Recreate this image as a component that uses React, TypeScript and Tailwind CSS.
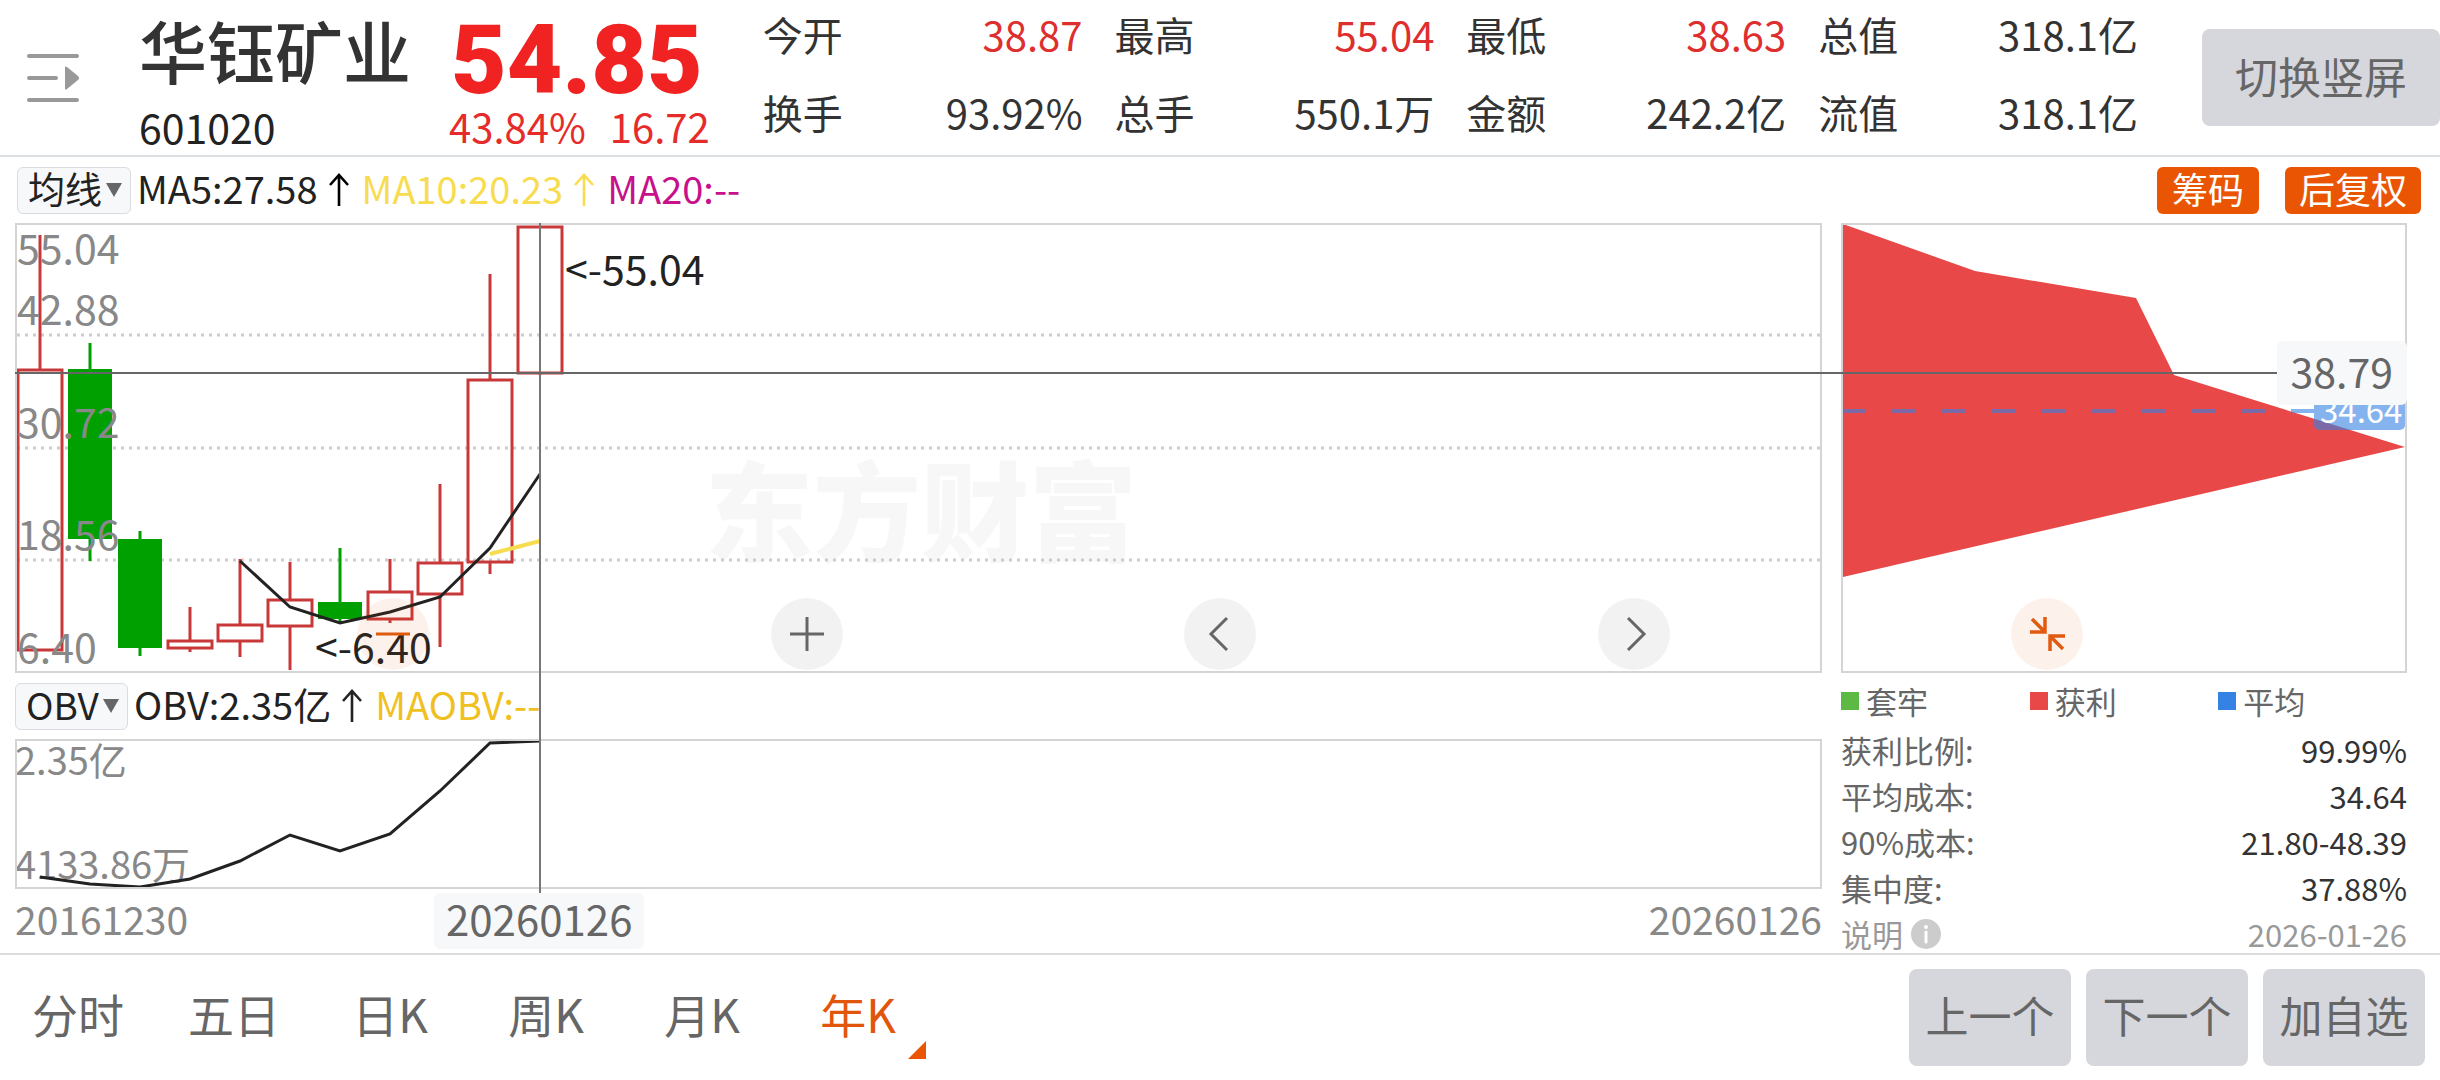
import type { ReactNode } from "react";

type Candle = { high: number; top: number; bottom: number; low: number; down?: boolean };

const QUOTES = [
  { label: "今开", value: "38.87", up: true },
  { label: "最高", value: "55.04", up: true },
  { label: "最低", value: "38.63", up: true },
  { label: "总值", value: "318.1亿" },
  { label: "换手", value: "93.92%" },
  { label: "总手", value: "550.1万" },
  { label: "金额", value: "242.2亿" },
  { label: "流值", value: "318.1亿" },
];

const CANDLES: Candle[] = [
  { high: 10, top: 145, bottom: 425, low: 425 },
  { high: 118, top: 144, bottom: 314, low: 336, down: true },
  { high: 306, top: 314, bottom: 423, low: 431, down: true },
  { high: 382, top: 416, bottom: 423, low: 427 },
  { high: 334, top: 400, bottom: 416, low: 432 },
  { high: 337, top: 375, bottom: 401, low: 445 },
  { high: 323, top: 377, bottom: 394, low: 397, down: true },
  { high: 334, top: 367, bottom: 394, low: 398 },
  { high: 259, top: 338, bottom: 369, low: 422 },
  { high: 49, top: 155, bottom: 337, low: 349 },
  { high: 2, top: 2, bottom: 148, low: 150 },
];

const MA5 = [336, 382, 398, 387, 372, 323, 249];
const MA10 = [329, 316];
const OBV = [136, 143, 146, 138, 120, 94, 110, 93, 50, 2, 0];

const PRICE_LABELS = [
  { text: "55.04", y: 39 },
  { text: "42.88", y: 100 },
  { text: "30.72", y: 213 },
  { text: "18.56", y: 325 },
  { text: "6.40", y: 438 },
];

const LEGEND = [
  { text: "套牢", color: "bg-[#5bb944]" },
  { text: "获利", color: "bg-[#e84848]" },
  { text: "平均", color: "bg-[#3482e4]" },
];

const CHIP_STATS = [
  { label: "获利比例:", value: "99.99%" },
  { label: "平均成本:", value: "34.64" },
  { label: "90%成本:", value: "21.80-48.39" },
  { label: "集中度:", value: "37.88%" },
];

const TABS = ["分时", "五日", "日K", "周K", "月K", "年K"];
const ACTIONS = ["上一个", "下一个", "加自选"];

const STEP = 50;
const FIRST_X = 23;

// Series that end at the last candle start part way along the axis
function linePoints(ys: number[], start: number) {
  return ys.map((y, i) => `${FIRST_X + (start + i) * STEP},${y}`).join(" ");
}

function UpArrow() {
  return (
    <svg width="22" height="34" viewBox="0 0 22 34" fill="none" stroke="currentColor" strokeWidth="2.6">
      <path d="M11 33V3M2 12L11 2L20 12" />
    </svg>
  );
}

function IndicatorSelect({ name, label }: { name: string; label: string }) {
  return (
    <div className="relative flex h-[47px] shrink-0 items-center rounded-md border border-[#d9dce0] bg-[#f7f8fa]">
      <select
        aria-label={label}
        className="h-full appearance-none bg-transparent pb-1 pl-2.5 pr-7 text-[37px] leading-[41px] text-[#222]"
      >
        <option>{name}</option>
      </select>
      <svg className="pointer-events-none absolute right-2" width="16" height="14" viewBox="0 0 16 14">
        <path d="M0 0H16L8 14Z" fill="#666" />
      </svg>
    </div>
  );
}

function Header() {
  return (
    <header className="flex h-[157px] items-center border-b-2 border-[#dcdfe1]">
      <button type="button" aria-label="切换列表" className="ml-[27px] mr-[59px] shrink-0">
        <svg width="53" height="52" viewBox="0 0 53 52">
          <g stroke="#999" strokeWidth="4" strokeLinecap="round">
            <path d="M2 4H50M2 26H29M2 48H50" />
          </g>
          <path d="M38 15Q38 14 40 15L51 24Q53 26 51 28L40 37Q38 38 38 37Z" fill="#999" />
        </svg>
      </button>
      <div className="w-[310px] shrink-0 pb-1 text-[#333]">
        <h1 className="text-[68px] leading-[100px] font-medium">华钰矿业</h1>
        <p className="text-[41px] leading-[52px] text-[#222]">601020</p>
      </div>
      <div className="shrink-0 pb-1 text-[#f02222]">
        <p className="pt-5 pl-0.5 font-[Roboto] text-[96px] leading-[80px] font-black">54.85</p>
        <p className="flex gap-6 text-[40px] leading-[52px] text-[#e62b2b]">
          <span>43.84%</span>
          <span>16.72</span>
        </p>
      </div>
      <dl className="ml-[53px] mr-16 grid flex-1 grid-cols-4 gap-x-8 gap-y-[18px] pb-2.5 text-[40px] leading-[60px] text-[#333]">
        {QUOTES.map((q) => (
          <div key={q.label} className="flex justify-between whitespace-nowrap">
            <dt>{q.label}</dt>
            <dd className={q.up ? "text-[#de2f2f]" : ""}>{q.value}</dd>
          </div>
        ))}
      </dl>
      <button
        type="button"
        className="h-[97px] w-[238px] shrink-0 rounded-lg bg-[#d6d7dc] pb-1 text-[43px] text-[#666]"
      >
        切换竖屏
      </button>
    </header>
  );
}

function CandleShape({ candle, x }: { candle: Candle; x: number }) {
  const { high, top, bottom, low, down } = candle;
  const color = down ? "#00a000" : "#c93838";
  return (
    <g stroke={color} strokeWidth="3">
      <path d={`M${x} ${high}V${top}M${x} ${bottom}V${low}`} />
      {down ? (
        <rect x={x - 22} y={top} width="44" height={bottom - top} fill={color} stroke="none" />
      ) : (
        <rect x={x - 22} y={top} width="44" height={bottom - top} fill="none" />
      )}
    </g>
  );
}

function PriceChart() {
  return (
    <div className="h-[450px] border-2 border-[#d4d4d4]">
      <svg width="100%" height="446" className="block">
        <text x="688" y="328" fontSize="108" fontWeight="900" fill="#f7f7f7">
          东方财富
        </text>
        <g stroke="#ccc" strokeWidth="3" strokeDasharray="3 5">
          <line x1="0" x2="100%" y1="110" y2="110" />
          <line x1="0" x2="100%" y1="223" y2="223" />
          <line x1="0" x2="100%" y1="335" y2="335" />
        </g>
        {CANDLES.map((c, i) => (
          <CandleShape key={i} candle={c} x={FIRST_X + i * STEP} />
        ))}
        <polyline points={linePoints(MA10, 9)} fill="none" stroke="#f8dc50" strokeWidth="4" />
        <polyline points={linePoints(MA5, 4)} fill="none" stroke="#222" strokeWidth="3" />
        <g fontSize="41" fill="#888">
          {PRICE_LABELS.map((l) => (
            <text key={l.text} x="0" y={l.y}>
              {l.text}
            </text>
          ))}
        </g>
        <g fontSize="41" fill="#222">
          <text x="548" y="60">&lt;-55.04</text>
          <text x="298" y="438">&lt;-6.40</text>
        </g>
      </svg>
    </div>
  );
}

function ObvChart() {
  return (
    <div className="h-[150px] border-2 border-[#d4d4d4]">
      <svg width="100%" height="146" className="block">
        <g fontSize="38" fill="#888">
          <text x="-2" y="34">2.35亿</text>
          <text x="-2" y="138">4133.86万</text>
        </g>
        <polyline points={linePoints(OBV, 0)} fill="none" stroke="#222" strokeWidth="3" />
      </svg>
    </div>
  );
}

function ChipPanel() {
  return (
    <aside className="-mb-1 text-[31px] text-[#666]">
      <div className="h-[450px] border-2 border-[#d4d4d4]">
        <svg width="562" height="446" viewBox="0 0 562 446" className="block">
          <polygon points="0,-1 132,46 293,73 331,150 562,222 0,352" fill="#e84848" />
          <g fill="#3482e4" stroke="#3482e4" opacity="0.6">
            <line x1="-2" x2="471" y1="186" y2="186" strokeWidth="4" strokeDasharray="25 25" />
            <rect x="471" y="167" width="91" height="38" rx="5" stroke="none" />
          </g>
          <text x="477" y="198" fontSize="33" fill="#fff">
            34.64
          </text>
        </svg>
      </div>
      <ul className="grid h-[54px] grid-cols-3 pt-0.5">
        {LEGEND.map((l) => (
          <li key={l.text} className="flex items-center gap-[7px]">
            <span className={`size-[18px] ${l.color}`} />
            {l.text}
          </li>
        ))}
      </ul>
      <dl className="leading-[46px]">
        {CHIP_STATS.map((s) => (
          <div key={s.label} className="flex justify-between">
            <dt>{s.label}</dt>
            <dd className="text-[#333]">{s.value}</dd>
          </div>
        ))}
        <div className="flex justify-between text-[#999]">
          <dt className="flex items-center gap-2">
            说明
            <svg width="30" height="30" viewBox="0 0 30 30">
              <circle cx="15" cy="15" r="15" fill="#ccc" />
              <circle cx="15" cy="8" r="2" fill="#fff" />
              <path d="M15 13V23" stroke="#fff" strokeWidth="3" strokeLinecap="round" />
            </svg>
          </dt>
          <dd>2026-01-26</dd>
        </div>
      </dl>
    </aside>
  );
}

function RoundButton({ label, accent, children }: { label: string; accent?: boolean; children: ReactNode }) {
  return (
    <button
      type="button"
      aria-label={label}
      className={`flex size-[72px] items-center justify-center rounded-full ${
        accent ? "bg-[#ea5504]/8 text-[#e05a10]" : "bg-black/5 text-[#666]"
      }`}
    >
      <svg width="36" height="36" viewBox="0 0 36 36" fill="none" stroke="currentColor" strokeWidth="3">
        {children}
      </svg>
    </button>
  );
}

function ChartControls() {
  return (
    <div className="absolute inset-x-0 top-[375px] flex justify-between px-[357px]">
      <RoundButton label="缩小" accent>
        <path d="M1 18H35" />
      </RoundButton>
      <RoundButton label="放大">
        <path d="M1 18H35M18 1V35" />
      </RoundButton>
      <RoundButton label="向左">
        <path d="M25 2L9 18L25 34" />
      </RoundButton>
      <RoundButton label="向右">
        <path d="M12 2L28 18L12 34" />
      </RoundButton>
      <RoundButton label="收起" accent>
        <path strokeWidth="3.5" d="M3 3L15 15M1 16H16V1M34 33L22 21M36 20H21V35" />
      </RoundButton>
    </div>
  );
}

function Charts() {
  return (
    <section className="relative grid grid-cols-[1fr_566px] gap-[19px] pl-[15px] pr-[33px]">
      <div>
        <PriceChart />
        <div className="flex h-[66px] items-center text-[38px] text-[#222]">
          <IndicatorSelect name="OBV" label="副图指标" />
          <span className="ml-1.5 mr-2.5 pb-1.5">OBV:2.35亿</span>
          <UpArrow />
          <span className="ml-3 pb-1.5 text-[#f0c020]">MAOBV:--</span>
        </div>
        <ObvChart />
        <div className="flex h-[64px] items-center justify-between pb-1.5 text-[39px] text-[#888]">
          <span>20161230</span>
          <span>20260126</span>
        </div>
      </div>
      <ChipPanel />

      {/* Crosshair */}
      <div className="pointer-events-none absolute left-[539px] top-0 h-[670px] w-0.5 bg-[#777]" />
      <div className="pointer-events-none absolute left-[434px] top-[670px] rounded-md bg-[#f7f8fa] px-3 pb-1.5 text-[42px] leading-[50px] text-[#666]">
        20260126
      </div>
      <div className="pointer-events-none absolute left-[15px] right-[33px] top-[118px] flex items-center">
        <div className="h-0.5 flex-1 bg-[#666]" />
        <div className="rounded-md bg-[#f7f8fa] px-3.5 pb-1.5 text-[41px] leading-[58px] text-[#666]">38.79</div>
      </div>
      <ChartControls />
    </section>
  );
}

function Footer() {
  return (
    <footer className="flex h-[126px] items-center justify-between border-t-2 border-[#dcdcdc] pr-[15px]">
      <nav className="flex h-full">
        {TABS.map((tab) => {
          const active = tab === "年K";
          return (
            <button
              key={tab}
              type="button"
              className={`relative h-full w-[156px] pb-2 text-[46px] ${active ? "text-[#e2560c]" : "text-[#666]"}`}
            >
              {tab}
              {active && (
                <svg className="absolute bottom-5 right-2.5" width="18" height="18" viewBox="0 0 18 18">
                  <path d="M18 0V18H0Z" fill="#ea5504" />
                </svg>
              )}
            </button>
          );
        })}
      </nav>
      <div className="flex gap-[15px]">
        {ACTIONS.map((a) => (
          <button
            key={a}
            type="button"
            className="h-[97px] w-[162px] rounded-lg bg-[#d6d7dc] pb-1.5 text-[43px] text-[#666]"
          >
            {a}
          </button>
        ))}
      </div>
    </footer>
  );
}

export default function App() {
  return (
    <div className="min-h-screen bg-white font-['Noto_Sans_CJK_SC','Noto_Sans',sans-serif]">
      <Header />
      <div className="flex h-[66px] items-center pl-[17px] pr-[19px] text-[38px]">
        <IndicatorSelect name="均线" label="主图指标" />
        <span className="ml-1.5 mr-2.5 pb-1.5 text-[#222]">MA5:27.58</span>
        <UpArrow />
        <div className="ml-3 flex items-center text-[#f8dc50]">
          <span className="mr-2.5 pb-1.5">MA10:20.23</span>
          <UpArrow />
        </div>
        <span className="ml-3 pb-1.5 text-[#c8108a]">MA20:--</span>
        <div className="ml-auto flex gap-[26px] text-[36px] leading-[43px] text-white">
          <button type="button" className="rounded-md bg-[#ea5504] px-[15px] pb-1">
            筹码
          </button>
          <button type="button" className="rounded-md bg-[#ea5504] px-[14px] pb-1">
            后复权
          </button>
        </div>
      </div>
      <Charts />
      <Footer />
    </div>
  );
}
